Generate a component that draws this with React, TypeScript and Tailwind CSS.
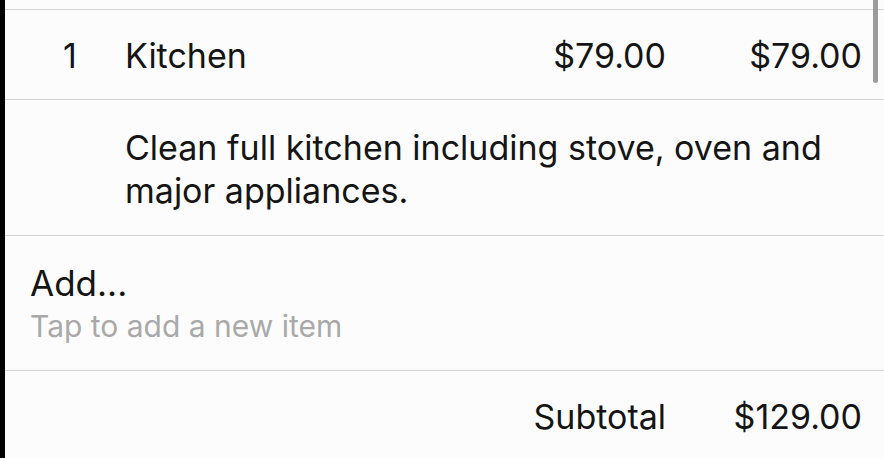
import React from "react";

const font = { fontFamily: "Inter, 'Open Sans', Arial, sans-serif" };

function Line() {
  return <div className="h-px w-full bg-[#d4d4d4]" />;
}

export default function App() {
  return (
    <div className="flex h-[458px] w-[884px] bg-black overflow-hidden" style={font}>
      <div className="relative ml-[5px] flex flex-1 flex-col bg-[#fcfcfc] text-[#151515]">
        <div className="h-[9px]" />
        <Line />
        <div className="flex h-[89px] items-start pt-[26px] text-[34px] leading-[40px]">
          <div className="w-[120px] pl-[58px]">1</div>
          <div className="flex-1">Kitchen</div>
          <div className="w-[200px] text-right">$79.00</div>
          <div className="w-[218px] pr-[22px] text-right">$79.00</div>
        </div>
        <Line />
        <div className="h-[135px] pl-[120px] pr-[30px] pt-[26px] text-[34px] leading-[43px]">
          Clean full kitchen including stove, oven and major appliances.
        </div>
        <Line />
        <div className="flex h-[134px] flex-col pl-[25px] pt-[27px]">
          <div className="text-[35px] leading-[40px]">Add...</div>
          <div className="mt-[6px] text-[30px] leading-[34px] text-[#a9a9a9]">Tap to add a new item</div>
        </div>
        <Line />
        <div className="flex flex-1 items-start pt-[26px] text-[34px] leading-[40px]">
          <div className="flex-1" />
          <div className="w-[200px] text-right">Subtotal</div>
          <div className="w-[218px] pr-[22px] text-right">$129.00</div>
        </div>
        <div className="absolute right-[6px] top-0 h-[83px] w-[5px] rounded-b-full bg-[#9c9c9c]" />
      </div>
    </div>
  );
}
